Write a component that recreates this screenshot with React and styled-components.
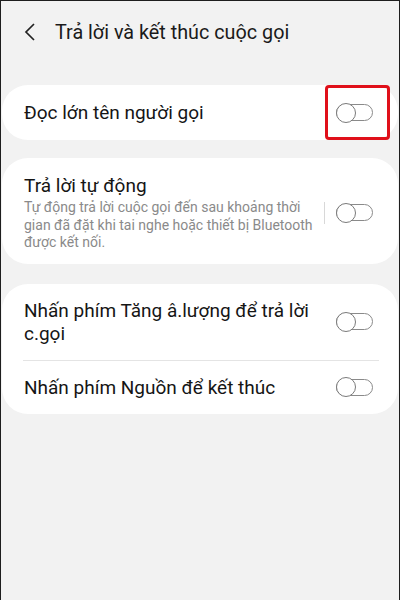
import React from "react";
import styled, { createGlobalStyle } from "styled-components";

const Global = createGlobalStyle`
  html, body {
    margin: 0;
    padding: 0;
    background: #f2f2f2;
  }
  * {
    box-sizing: border-box;
  }
`;

const Screen = styled.div`
  width: 400px;
  height: 600px;
  background: #f2f2f2;
  border: 1px solid #1e1e1e;
  border-bottom: none;
  font-family: Roboto, "Noto Sans", sans-serif;
  color: #111;
  overflow: hidden;
`;

const Header = styled.div`
  height: 62px;
  display: flex;
  align-items: center;
  padding: 0 0 0 22px;
  gap: 16px;

  h1 {
    margin: 0;
    font-size: 19.8px;
    font-weight: 400;
    color: #1a1a1a;
  }
`;

const List = styled.div`
  display: flex;
  flex-direction: column;
  padding: 22px 1px 0;
`;

const Card = styled.div`
  background: #fff;
  border-radius: 26px;
  padding: ${(p) => p.pad || "0"};
  margin-top: ${(p) => p.top || 0}px;
`;

const Row = styled.div`
  position: relative;
  display: flex;
  align-items: center;
  min-height: ${(p) => p.h || 55}px;
  padding: 0 25px 0 22px;
`;

const Texts = styled.div`
  flex: 1;
  display: flex;
  flex-direction: column;
`;

const Title = styled.div`
  font-size: 19px;
  line-height: 23px;
  color: #151515;
`;

const Sub = styled.div`
  margin-top: 2px;
  font-size: 14px;
  line-height: 17.5px;
  color: #8a8a8a;
`;

const VLine = styled.div`
  width: 1px;
  height: 22px;
  background: #d8d8d8;
  margin: 0 11px 0 0;
  align-self: center;
`;

const Divider = styled.div`
  height: 1px;
  background: #e4e4e4;
  margin: 0 19px 0 21px;
`;

const SwitchWrap = styled.div`
  position: relative;
  width: 37px;
  height: 20px;
  flex-shrink: 0;
  margin-left: ${(p) => (p.tight ? 0 : 12)}px;
`;

const Track = styled.div`
  position: absolute;
  left: 0;
  top: 1.5px;
  width: 37px;
  height: 17px;
  border: 1.4px solid #8a8a8a;
  border-radius: 9px;
`;

const Knob = styled.div`
  position: absolute;
  left: 0;
  top: 0;
  width: 20px;
  height: 20px;
  border: 1.4px solid #7a7a7a;
  border-radius: 50%;
  background: #fff;
`;

const Highlight = styled.div`
  position: absolute;
  right: 8px;
  top: 0;
  width: 65px;
  height: 55px;
  border: 3px solid #e0101a;
  border-radius: 4px;
`;

const Switch = ({ tight }) => (
  <SwitchWrap tight={tight}>
    <Track />
    <Knob />
  </SwitchWrap>
);

export default function App() {
  return (
    <>
      <Global />
      <Screen>
        <Header>
          <svg width="16" height="20" viewBox="0 0 16 20">
            <path d="M11 2 L3 10 L11 18" fill="none" stroke="#222" strokeWidth="1.7" />
          </svg>
          <h1>Trả lời và kết thúc cuộc gọi</h1>
        </Header>
        <List>
          <Card>
            <Row h={55}>
              <Texts>
                <Title>Đọc lớn tên người gọi</Title>
              </Texts>
              <Switch />
              <Highlight />
            </Row>
          </Card>
          <Card pad="16px 0 12px" top={18}>
            <Row h={70}>
              <Texts>
                <Title>Trả lời tự động</Title>
                <Sub>
                  Tự động trả lời cuộc gọi đến sau khoảng thời gian đã đặt khi tai nghe hoặc thiết bị
                  Bluetooth được kết nối.
                </Sub>
              </Texts>
              <VLine />
              <Switch tight />
            </Row>
          </Card>
          <Card top={20}>
            <Row h={76}>
              <Texts>
                <Title>Nhấn phím Tăng â.lượng để trả lời c.gọi</Title>
              </Texts>
              <Switch />
            </Row>
            <Divider />
            <Row h={53}>
              <Texts>
                <Title>Nhấn phím Nguồn để kết thúc</Title>
              </Texts>
              <Switch />
            </Row>
          </Card>
        </List>
      </Screen>
    </>
  );
}
